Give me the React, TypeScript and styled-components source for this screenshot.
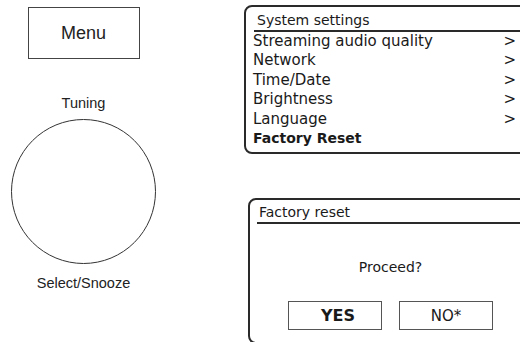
import styled, { createGlobalStyle } from "styled-components";

const GlobalStyle = createGlobalStyle`
  html, body {
    margin: 0;
    padding: 0;
    background: #ffffff;
    overflow: hidden;
  }
  body {
    width: 520px;
    height: 342px;
  }
`;

const Page = styled.div`
  display: flex;
  flex-direction: row;
  width: 520px;
  height: 342px;
  overflow: hidden;
  color: #1a1a1a;
`;

const Controls = styled.div`
  width: 167px;
  flex-shrink: 0;
  display: flex;
  flex-direction: column;
  align-items: center;
  padding-top: 7px;
  font-family: "Liberation Sans", Arial, sans-serif;
`;

const MenuButton = styled.div`
  box-sizing: border-box;
  width: 112px;
  height: 52px;
  border: 1.5px solid #444;
  display: flex;
  align-items: center;
  justify-content: center;
  font-size: 18px;
  color: #222;
`;

const Label = styled.div<{ $gap: number }>`
  margin-top: ${(p) => p.$gap}px;
  font-size: 14.5px;
  line-height: 16px;
  color: #222;
`;

const Knob = styled.div`
  box-sizing: border-box;
  margin-top: 8px;
  width: 145px;
  height: 145px;
  border: 1px solid #333;
  border-radius: 50%;
`;

const Screens = styled.div`
  margin-left: 77px;
  display: flex;
  flex-direction: column;
  font-family: "DejaVu Sans", Verdana, sans-serif;
`;

const Screen = styled.div<{ $left: number; $top: number; $width: number; $height: number }>`
  box-sizing: border-box;
  margin-left: ${(p) => p.$left}px;
  margin-top: ${(p) => p.$top}px;
  width: ${(p) => p.$width}px;
  height: ${(p) => p.$height}px;
  flex-shrink: 0;
  border: 2px solid #2a2a2a;
  border-radius: 8px 0 0 8px;
  display: flex;
  flex-direction: column;
`;

const Title = styled.div<{ $indent: number; $pad: number; $top: number }>`
  margin-left: ${(p) => p.$indent}px;
  padding-left: ${(p) => p.$pad}px;
  padding-top: ${(p) => p.$top}px;
  font-size: 14px;
  line-height: 19px;
  border-bottom: 2px solid #2a2a2a;
`;

const List = styled.ul`
  list-style: none;
  margin: 0;
  padding: 0 0 0 7px;
`;

const Item = styled.li<{ $bold?: boolean }>`
  display: flex;
  justify-content: space-between;
  height: 19.4px;
  line-height: 19.4px;
  padding-right: 16px;
  font-size: ${(p) => (p.$bold ? 14 : 15)}px;
  font-weight: ${(p) => (p.$bold ? 700 : 400)};
`;

const Arrow = styled.span`
  font-size: 15px;
`;

const Dialog = styled.div`
  display: flex;
  flex-direction: column;
  align-items: center;
`;

const Question = styled.div`
  margin-top: 34px;
  font-size: 14px;
  line-height: 19px;
`;

const Choices = styled.div`
  display: flex;
  gap: 17px;
  margin-top: 24px;
`;

const Choice = styled.div<{ $bold?: boolean }>`
  box-sizing: border-box;
  width: 94px;
  height: 29px;
  border: 1px solid #555;
  display: flex;
  align-items: center;
  justify-content: center;
  padding-left: ${(p) => (p.$bold ? 6 : 0)}px;
  font-size: ${(p) => (p.$bold ? 16 : 15)}px;
  font-weight: ${(p) => (p.$bold ? 700 : 400)};
`;

const items = [
  "Streaming audio quality",
  "Network",
  "Time/Date",
  "Brightness",
  "Language",
];

export default function App() {
  return (
    <Page>
      <GlobalStyle />
      <Controls>
        <MenuButton>Menu</MenuButton>
        <Label $gap={36}>Tuning</Label>
        <Knob />
        <Label $gap={11}>Select/Snooze</Label>
      </Controls>
      <Screens>
        <Screen $left={0} $top={5} $width={290} $height={149}>
          <Title $indent={8} $pad={3} $top={4}>
            System settings
          </Title>
          <List>
            {items.map((name) => (
              <Item key={name}>
                <span>{name}</span>
                <Arrow>&gt;</Arrow>
              </Item>
            ))}
            <Item $bold>
              <span>Factory Reset</span>
            </Item>
          </List>
        </Screen>
        <Screen $left={4} $top={44} $width={285} $height={146}>
          <Title $indent={7} $pad={2} $top={3}>
            Factory reset
          </Title>
          <Dialog>
            <Question>Proceed?</Question>
            <Choices>
              <Choice $bold>YES</Choice>
              <Choice>NO*</Choice>
            </Choices>
          </Dialog>
        </Screen>
      </Screens>
    </Page>
  );
}
